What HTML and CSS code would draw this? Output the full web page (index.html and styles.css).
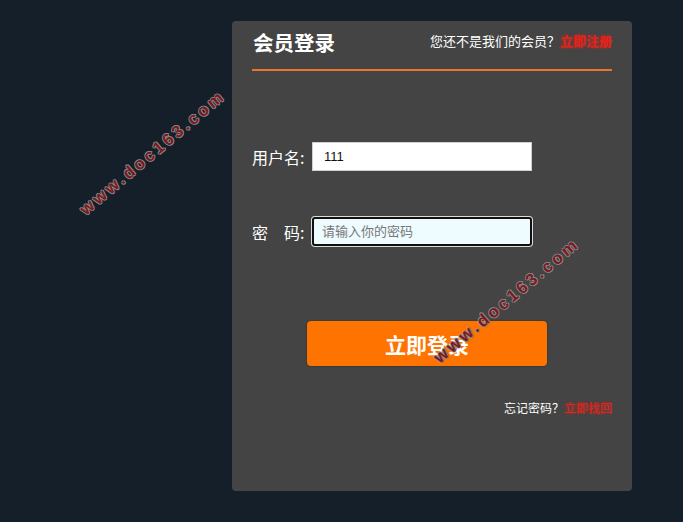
FILE: index.html
```html
<!DOCTYPE html>
<html lang="zh">
<head>
<meta charset="utf-8">
<title>会员登录</title>
<link rel="stylesheet" href="styles.css">
</head>
<body>
<div class="panel">
  <div class="panel-head">
    <h2 class="title">会员登录</h2>
    <div class="reg">您还不是我们的会员？<a class="red-link bold" href="#">立即注册</a></div>
  </div>
  <form class="form">
    <div class="row row-user">
      <label class="lbl">用户名:</label>
      <input class="inp" type="text" value="111">
    </div>
    <div class="row row-pass">
      <label class="lbl">密&emsp;码:</label>
      <input class="inp inp-focus" type="password" placeholder="请输入你的密码">
    </div>
    <div class="btn-row">
      <button class="btn" type="button">立即登录</button>
    </div>
    <div class="forgot">忘记密码？<a class="red-link" href="#">立即找回</a></div>
  </form>
</div>
<div class="wm wm1">www.doc163.com</div>
<div class="wm wm2">www.doc163.com</div>
</body>
</html>
```
FILE: styles.css
```css
html, body {
  margin: 0;
  padding: 0;
  background: #151f2a;
  height: 100%;
  font-family: "Liberation Sans", "Noto Sans CJK SC", sans-serif;
  overflow: hidden;
}
.panel {
  margin: 21px 0 0 232px;
  width: 400px;
  height: 470px;
  background: #444444;
  border-radius: 4px;
  box-sizing: border-box;
  padding: 0 20px;
}
.panel-head {
  height: 50px;
  border-bottom: 2px solid #e8762c;
  display: flex;
  align-items: center;
  justify-content: space-between;
  box-sizing: border-box;
}
.title {
  margin: 0;
  color: #fff;
  font-size: 20.5px;
  font-weight: bold;
  font-family: "Noto Sans CJK SC", sans-serif;
  margin-left: 1px;
  margin-top: -7px;
}
.reg {
  color: #fff;
  font-size: 13px;
  font-family: "Noto Sans CJK SC", sans-serif;
  margin-top: -9px;
}
.red-link {
  color: #e8201a;
  text-decoration: none;
  text-shadow: 0 0 3px rgba(255, 40, 20, 0.7);
}
.bold { font-weight: bold; }
.form {
  padding-top: 71px;
}
.row {
  display: flex;
  align-items: center;
  height: 29px;
}
.row-pass {
  margin-top: 46px;
}
.lbl {
  width: 60px;
  color: #fff;
  font-size: 16px;
  font-family: "Noto Sans CJK SC", sans-serif;
}
.inp {
  width: 220px;
  height: 29px;
  box-sizing: border-box;
  border: 1px solid #cfcfcf;
  background: #fff;
  padding: 0 11px;
  font-size: 13px;
  font-family: "Liberation Sans", "Noto Sans CJK SC", sans-serif;
  color: #111;
  outline: none;
}
.inp-focus {
  border: 2px solid #111;
  border-radius: 3px;
  background: #eefcff;
  box-shadow: 0 0 0 1px #ddd;
  padding: 0 8px;
}
.inp::placeholder {
  color: #777;
  font-family: "Noto Sans CJK SC", sans-serif;
}
.btn-row {
  margin-top: 75px;
  padding-left: 55px;
}
.btn {
  width: 240px;
  height: 45px;
  border: none;
  border-radius: 4px;
  background: #ff7300;
  color: #fff;
  font-size: 21px;
  font-weight: bold;
  font-family: "Noto Sans CJK SC", sans-serif;
  box-shadow: 0 0 2px rgba(0,0,0,0.4);
}
.forgot {
  margin-top: 33px;
  text-align: right;
  color: #fff;
  font-size: 12px;
  font-family: "Noto Sans CJK SC", sans-serif;
}
.wm {
  position: absolute;
  transform: translate(-50%, -50%) rotate(-40deg);
  color: #7a1a22;
  font-size: 17px;
  font-weight: bold;
  letter-spacing: 3px;
  white-space: nowrap;
  font-family: "Liberation Sans", sans-serif;
  text-shadow: 1px 0 0 #8c8c8c, -1px 0 0 #8c8c8c, 0 1px 0 #8c8c8c, 0 -1px 0 #8c8c8c;
}
.wm1 { left: 153px; top: 153px; }
.wm2 { left: 507px; top: 301px; }
```
